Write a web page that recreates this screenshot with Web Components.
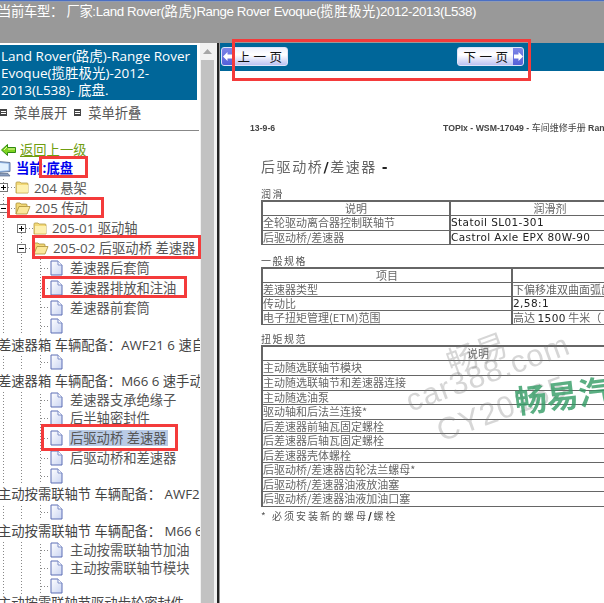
<!DOCTYPE html>
<html lang="zh">
<head>
<meta charset="utf-8">
<title>Range Rover Evoque</title>
<style>
  html, body { margin: 0; height: 100%; overflow: hidden; background: #fff; }
  body { font-family: "Open Sans", "Noto Sans CJK SC", sans-serif; }
  manual-page b { font-family: "DejaVu Sans", sans-serif; font-weight: bold; color: #222; }
  manual-page small { font-size: 9px; font-weight: 400; }
</style>
</head>
<body>

<manual-app>
  <top-bar slot="top"><span>当前车型： 厂家:</span>Land Rover(<span>路虎</span>)Range Rover Evoque(<span>揽胜极光</span>)2012-2013(L538)</top-bar>

  <side-panel slot="side">
    <span slot="title">Land Rover(路虎)-Range Rover<br>Evoque(揽胜极光)-2012-<br>2013(L538)- 底盘.</span>
    <tree-row kind="back" h="18">返回上一级</tree-row>
    <tree-row kind="current" h="18">当前:底盘</tree-row>
    <tree-row kind="plus" level="0" h="21">204 悬架</tree-row>
    <tree-row kind="minus" level="0" h="20">205 传动</tree-row>
    <tree-row kind="plus" level="1" h="20">205-01 驱动轴</tree-row>
    <tree-row kind="minus" level="1" h="20">205-02 后驱动桥 差速器</tree-row>
    <tree-row kind="doc" h="20">差速器后套筒</tree-row>
    <tree-row kind="doc" h="20">差速器排放和注油</tree-row>
    <tree-row kind="doc" h="19">差速器前套筒</tree-row>
    <tree-row kind="doc" h="18"></tree-row>
    <tree-row kind="long" h="19">差速器箱 车辆配备：AWF21 6 速自动变速器</tree-row>
    <tree-row kind="doc" h="16"></tree-row>
    <tree-row kind="long" h="22">差速器箱 车辆配备：M66 6 速手动变速器</tree-row>
    <tree-row kind="doc" h="16">差速器支承绝缘子</tree-row>
    <tree-row kind="doc" h="20">后半轴密封件</tree-row>
    <tree-row kind="doc" h="20" selected>后驱动桥 差速器</tree-row>
    <tree-row kind="doc" h="20">后驱动桥和差速器</tree-row>
    <tree-row kind="doc" h="16"></tree-row>
    <tree-row kind="long" h="20">主动按需联轴节 车辆配备： AWF21 6 速自动变速器</tree-row>
    <tree-row kind="doc" h="16"></tree-row>
    <tree-row kind="long" h="22">主动按需联轴节 车辆配备： M66 6 速手动变速器</tree-row>
    <tree-row kind="doc" h="16">主动按需联轴节加油</tree-row>
    <tree-row kind="doc" h="20">主动按需联轴节模块</tree-row>
    <tree-row kind="doc" h="16"></tree-row>
    <tree-row kind="long" h="18">主动按需联轴节驱动齿轮密封件</tree-row>
  </side-panel>

  <fake-scrollbar slot="scroll"></fake-scrollbar>

  <div slot="main">
    <nav-strip>
      <nav-button dir="prev" slot="prev">上一页</nav-button>
      <nav-button dir="next" slot="next">下一页</nav-button>
    </nav-strip>
    <manual-page>
      <span slot="date">13-9-6</span>
      <span slot="source">TOPIx - WSM-17049 - <small>车间维修手册</small> Range Rover</span>
      <span slot="title">后驱动桥<b>/</b>差速器 <b>-</b></span>

      <spec-table label="润滑" label-h="22" row-h="14.3" cols="186px 200px">
        <spec-row head><span>说明</span><span>润滑剂</span></spec-row>
        <spec-row><span>全轮驱动离合器控制联轴节</span><span class="lat">Statoil SL01-301</span></spec-row>
        <spec-row><span>后驱动桥/差速器</span><span class="lat">Castrol Axle EPX 80W-90</span></spec-row>
      </spec-table>

      <spec-table label="一般规格" label-h="22" row-h="14" cols="248px 1fr">
        <spec-row head><span>项目</span><span></span></spec-row>
        <spec-row><span>差速器类型</span><span>下偏移准双曲面弧齿锥齿轮</span></spec-row>
        <spec-row><span>传动比</span><span class="lat">2,58:1</span></spec-row>
        <spec-row><span>电子扭矩管理(ETM)范围</span><span>高达 <span class="lat">1500</span> 牛米（</span></spec-row>
      </spec-table>

      <spec-table label="扭矩规范" label-h="20" row-h="14.55" cols="430px">
        <spec-row head><span>说明</span></spec-row>
        <spec-row><span>主动随选联轴节模块</span></spec-row>
        <spec-row><span>主动随选联轴节和差速器连接</span></spec-row>
        <spec-row><span>主动随选油泵</span></spec-row>
        <spec-row><span>驱动轴和后法兰连接*</span></spec-row>
        <spec-row><span>后差速器前轴瓦固定螺栓</span></spec-row>
        <spec-row><span>后差速器后轴瓦固定螺栓</span></spec-row>
        <spec-row><span>后差速器壳体螺栓</span></spec-row>
        <spec-row><span>后驱动桥/差速器齿轮法兰螺母*</span></spec-row>
        <spec-row><span>后驱动桥/差速器油液放油塞</span></spec-row>
        <spec-row><span>后驱动桥/差速器油液加油口塞</span></spec-row>
      </spec-table>
      <span slot="note">* 必须安装新的螺母<b>/</b>螺栓</span>
    </manual-page>
  </div>
</manual-app>

<red-mark x="232" y="39" w="299" h="42"></red-mark>
<red-mark x="39" y="156" w="49" h="22"></red-mark>
<red-mark x="7" y="197" w="97" h="21"></red-mark>
<red-mark x="32" y="235" w="169" h="24"></red-mark>
<red-mark x="42" y="276" w="145" h="22"></red-mark>
<red-mark x="41" y="424" w="137" h="27"></red-mark>

<script>
  function shadow(el, html) {
    el.attachShadow({mode: 'open'}).innerHTML = html;
  }

  const icons = {
    plus: `<svg width="9" height="9" viewBox="0 0 9 9"><rect x=".5" y=".5" width="8" height="8" fill="#fff" stroke="#777"/><path d="M2 4.5h5M4.5 2v5" stroke="#000"/></svg>`,
    minus: `<svg width="9" height="9" viewBox="0 0 9 9"><rect x=".5" y=".5" width="8" height="8" fill="#fff" stroke="#777"/><path d="M2 4.5h5" stroke="#000"/></svg>`,
    folder: `<svg width="15" height="13" viewBox="0 0 15 13"><path d="M1 3V2q0-1 1-1h3l1 1h6q1 0 1 1v9H1z" fill="#f3d977" stroke="#b39a45" stroke-width=".8"/><path d="M2 4h11v7.500H2z" fill="#fdf0ae"/></svg>`,
    open: `<svg width="16" height="13" viewBox="0 0 16 13"><path d="M1 12V2q0-1 1-1h3l1 1h5q1 0 1 1v1" fill="#f3d977" stroke="#a88d35" stroke-width=".8"/><path d="M1 12l3-7.500h11L12 12z" fill="#fbe89a" stroke="#a88d35" stroke-width=".8"/></svg>`,
    doc: `<svg width="13" height="16" viewBox="0 0 13 16"><defs><linearGradient id="d" x1="0" y1="0" x2="1" y2="1"><stop offset="0" stop-color="#fff"/><stop offset="1" stop-color="#c9d4f2"/></linearGradient></defs><path d="M1 1h7l4 4v10H1z" fill="url(#d)" stroke="#5d6fb5"/><path d="M8 1v4h4" fill="#fff" stroke="#7f8fc8"/></svg>`,
    back: `<svg width="15" height="12" viewBox="0 0 15 12"><path d="M.5 6L6.500.5v3H14.500v5H6.500v3z" fill="#7ed321" stroke="#2f8a10"/><path d="M3 6l3-3M7 5h7" stroke="#e6f9a0"/></svg>`,
    current: `<svg width="12" height="17" viewBox="0 0 12 17"><path d="M-2 1.500l12 1v9l-12 1z" fill="#8fb6ea" stroke="#6d7f9e"/><path d="M-1 3l9.500.7v6.600L-1 11z" fill="#e2f1fe"/><path d="M0 13.500h8l2 2.500H-1z" fill="#8b9fc0" stroke="#56688a" stroke-width=".7"/></svg>`
  };

  customElements.define('manual-app', class extends HTMLElement {
    constructor() {
      super();
      shadow(this, `<style>
        :host { display: grid; grid-template-columns: 200px 17px 3px 1fr; grid-template-rows: 43px 1fr; height: 603px; overflow: hidden; }
        .top { grid-column: 1 / -1; min-width: 0; overflow: hidden; }
        .rule { background: linear-gradient(90deg, #222 0 2px, #999 2px); }
        .main { min-width: 0; overflow: hidden; }
      </style>
      <div class="top"><slot name="top"></slot></div>
      <slot name="side"></slot>
      <slot name="scroll"></slot>
      <div class="rule"></div>
      <div class="main"><slot name="main"></slot></div>`);
    }
  });

  customElements.define('top-bar', class extends HTMLElement {
    constructor() {
      super();
      shadow(this, `<style>
        :host { display: block; height: 43px; box-sizing: border-box; background: linear-gradient(#4a6fc4 0 1px, #8f9bb5 1px 2px, #999 2px); color: #fff; font: 13.3px/24px "Liberation Sans", "Noto Sans CJK SC", sans-serif; letter-spacing: -.4px; margin-left: -2px; white-space: nowrap; overflow: hidden; }
        ::slotted(span) { letter-spacing: .6px; }
        ::slotted(span:first-child) { letter-spacing: -.3px; }
      </style><slot></slot>`);
    }
  });

  customElements.define('side-panel', class extends HTMLElement {
    constructor() {
      super();
      shadow(this, `<style>
        :host { display: block; min-width: 0; overflow: hidden; height: 560px; background: #fff; }
        .title { margin: 2px 3px 0 0; height: 55px; box-sizing: border-box; background: #006699; color: #fff; font: 13.5px/17px "Open Sans", "Noto Sans CJK SC", sans-serif; padding: 3px 0 0 1px; white-space: nowrap; overflow: hidden; }
        .tools { display: flex; align-items: center; height: 31px; box-sizing: border-box; border-bottom: 1px solid #888; font: 13.3px "Noto Sans CJK SC", sans-serif; color: #555; padding-bottom: 5px; margin-right: 1px; }
        .tools i { width: 7px; height: 7px; border: 1px solid #444; margin-right: 6px; background: repeating-linear-gradient(#444 0 1px, #fff 1px 2px); background-clip: content-box; padding: 0; box-sizing: border-box; }
        .tools span { margin-right: 7px; }
        .tools i + span { margin-left: 1px; }
        .tree { padding-top: 10px; background:
          repeating-linear-gradient(#888 0 1px, transparent 1px 3px) 3px 48px / 1px 100% no-repeat,
          repeating-linear-gradient(#888 0 1px, transparent 1px 3px) 21px 102px / 1px 100% no-repeat,
          repeating-linear-gradient(#888 0 1px, transparent 1px 3px) 40px 122px / 1px 100% no-repeat; }
      </style>
      <div class="title"><slot name="title"></slot></div>
      <div class="tools"><i></i><span>菜单展开</span><i></i><span>菜单折叠</span></div>
      <div class="tree"><slot></slot></div>`);
    }
  });

  customElements.define('tree-row', class extends HTMLElement {
    constructor() {
      super();
      const kind = this.getAttribute('kind');
      const level = +(this.getAttribute('level') || 0);
      const h = this.getAttribute('h') || 20;
      let lead = '';
      if (kind === 'plus' || kind === 'minus') {
        lead = `<span class="box" style="margin-left:${level * 18 - 1}px">${icons[kind]}</span><span class="dots" style="width:7px"></span>` +
          `<span class="ic">${kind === 'plus' ? icons.folder : icons.open}</span>`;
      } else if (kind === 'doc') {
        lead = `<span class="dots" style="margin-left:41px;width:9px"></span><span class="ic">${icons.doc}</span>`;
      } else if (kind === 'back') {
        lead = `<span class="ic" style="margin:0 4px 0 1px">${icons.back}</span>`;
      } else if (kind === 'current') {
        lead = `<span class="ic" style="margin-right:4px">${icons.current}</span>`;
      }
      shadow(this, `<style>
        :host { display: flex; align-items: center; height: ${h}px; font: 13.3px/16px "Open Sans", "Noto Sans CJK SC", sans-serif; color: #555; white-space: nowrap; overflow: hidden; }
        :host([kind="long"]) { background: #fff; margin-left: -2px; color: #444; }
        :host([kind="back"]) { color: #6f9d10; text-decoration: underline; }
        :host([kind="current"]) { color: #0000ee; font-weight: bold; }
        .box, .ic { display: inline-flex; flex: none; }
        .dots { flex: none; height: 1px; background: repeating-linear-gradient(90deg, #888 0 1px, transparent 1px 3px); }
        .ic { margin-right: 4px; }
        :host([kind="doc"]) .ic { margin-right: 7px; }
        :host([selected]) .txt { background: #b9cbe6; padding: 0 1px; margin-left: -1px; }
      </style>${lead}<span class="txt"><slot></slot></span>`);
    }
  });

  customElements.define('fake-scrollbar', class extends HTMLElement {
    constructor() {
      super();
      shadow(this, `<style>
        :host { display: flex; flex-direction: column; background: #f1f1f1; height: 560px; padding: 0 3px 0 1px; box-sizing: border-box; }
        .up { height: 17px; display: flex; justify-content: center; align-items: center; }
        .up svg { display: block; }
        .thumb { flex: 1; background: #c2c2c2; }
      </style>
      <div class="up"><svg width="9" height="5"><path d="M4.500 0L9 5H0z" fill="#a6a6a6"/></svg></div>
      <div class="thumb"></div>`);
    }
  });

  customElements.define('nav-strip', class extends HTMLElement {
    constructor() {
      super();
      shadow(this, `<style>
        :host { display: flex; align-items: center; height: 28px; background: #006699; padding: 0 0 1px 1px; box-sizing: border-box; }
        .gap { width: 169px; flex: none; }
      </style><slot name="prev"></slot><div class="gap"></div><slot name="next"></slot>`);
    }
  });

  customElements.define('nav-button', class extends HTMLElement {
    constructor() {
      super();
      const next = this.getAttribute('dir') === 'next';
      const arrow = next
        ? `<svg width="9" height="9" viewBox="0 0 9 9"><path d="M9 4.500L4.500 0v2.500H0v4h4.500V9z" fill="#fff"/></svg>`
        : `<svg width="9" height="9" viewBox="0 0 9 9"><path d="M0 4.500L4.500 0v2.500H9v4H4.500V9z" fill="#fff"/></svg>`;
      shadow(this, `<style>
        :host { display: flex; align-items: stretch; flex-direction: ${next ? 'row-reverse' : 'row'}; width: 67px; height: 19px; box-sizing: border-box; border: 1px solid #dfe3f7; border-radius: 3px; background: linear-gradient(#eef0fd, #fff 40%, #bcc2f2); font: 12.5px/17px "Noto Sans CJK SC", sans-serif; color: #111; overflow: hidden; }
        .arrow { width: 10px; flex: none; display: flex; align-items: center; justify-content: center; background: linear-gradient(#7d86e8, #5560d8); }
        .label { flex: 1; text-align: center; letter-spacing: 3.500px; padding-left: 4px; white-space: nowrap; }
      </style><span class="arrow">${arrow}</span><span class="label"><slot></slot></span>`);
    }
  });

  customElements.define('manual-page', class extends HTMLElement {
    constructor() {
      super();
      shadow(this, `<style>
        :host { display: block; position: relative; height: 532px; overflow: hidden; background: #fff; color: #555; font-family: "Noto Sans CJK SC", sans-serif; filter: blur(.35px); }
        .head { display: flex; margin: 51px 0 0 30px; font: 600 8.700px/12px "Liberation Sans", "Noto Sans CJK SC", sans-serif; color: #444; white-space: nowrap; height: 12px; }
        .head .d { width: 193px; flex: none; }
        .body { margin-left: 41px; width: 500px; }
        .title { font-size: 14px; line-height: 20px; letter-spacing: 1.600px; margin-top: 22px; height: 22px; color: #666; }
        .note { font-size: 10px; line-height: 13px; letter-spacing: 2px; margin-top: 2px; color: #555; }
      </style>
      <div class="head"><span class="d"><slot name="date"></slot></span><slot name="source"></slot></div>
      <div class="body">
        <div class="title"><slot name="title"></slot></div>
        <slot></slot>
        <div class="note"><slot name="note"></slot></div>
      </div>
      <water-mark></water-mark>`);
    }
  });

  customElements.define('spec-table', class extends HTMLElement {
    constructor() {
      super();
      const lh = this.getAttribute('label-h');
      shadow(this, `<style>
        :host { display: block; --cols: ${this.getAttribute('cols')}; --row-h: ${this.getAttribute('row-h')}px; }
        .label { font-size: 10px; line-height: 13px; letter-spacing: 1.500px; height: ${lh}px; box-sizing: border-box; color: #555; padding-top: ${lh - 13}px; }
        .grid { border: 2px solid #666; border-bottom: 0; }
      </style>
      <div class="label">${this.getAttribute('label')}</div>
      <div class="grid"><slot></slot></div>`);
    }
  });

  customElements.define('spec-row', class extends HTMLElement {
    constructor() {
      super();
      shadow(this, `<style>
        :host { display: grid; grid-template-columns: var(--cols); height: var(--row-h); box-sizing: border-box; border-bottom: 1.500px solid #666; font-size: 11px; line-height: 13px; color: #666; white-space: nowrap; overflow: hidden; }
        ::slotted(span) { overflow: hidden; }
        ::slotted(span:nth-child(2)) { border-left: 2px solid #666; }
        :host([head]) { text-align: center; }
      </style><slot></slot>`);
    }
    connectedCallback() {
      this.querySelectorAll('.lat').forEach(s => {
        s.style.cssText = 'font-family:"DejaVu Sans",sans-serif;color:#222;letter-spacing:.4px;font-size:10.5px';
      });
    }
  });

  customElements.define('water-mark', class extends HTMLElement {
    constructor() {
      super();
      shadow(this, `<style>
        span { position: absolute; white-space: nowrap; font-family: "Liberation Sans", "Noto Sans CJK SC", sans-serif; color: rgba(120, 120, 120, .3); }
        .a { left: 225px; top: 258px; font-size: 31px; transform: rotate(-20deg); }
        .b { left: 182px; top: 284px; font-size: 31px; transform: rotate(-20deg); letter-spacing: 1px; }
        .c { left: 214px; top: 320px; font-size: 31px; transform: rotate(-20deg); letter-spacing: 1px; }
        .d { left: 294px; top: 298px; font-size: 32px; font-weight: bold; transform: rotate(-7deg); color: rgba(50, 155, 100, .8); }
      </style>
      <span class="a">畅易</span>
      <span class="b">car388.com</span>
      <span class="c">CY20165</span>
      <span class="d">畅易汽车</span>`);
    }
  });

  customElements.define('red-mark', class extends HTMLElement {
    constructor() {
      super();
      const g = n => this.getAttribute(n);
      shadow(this, `<style>
        :host { position: absolute; left: ${g('x')}px; top: ${g('y')}px; width: ${g('w')}px; height: ${g('h')}px; box-sizing: border-box; border: 3px solid #f43b3b; pointer-events: none; }
      </style>`);
    }
  });
</script>
</body>
</html>
